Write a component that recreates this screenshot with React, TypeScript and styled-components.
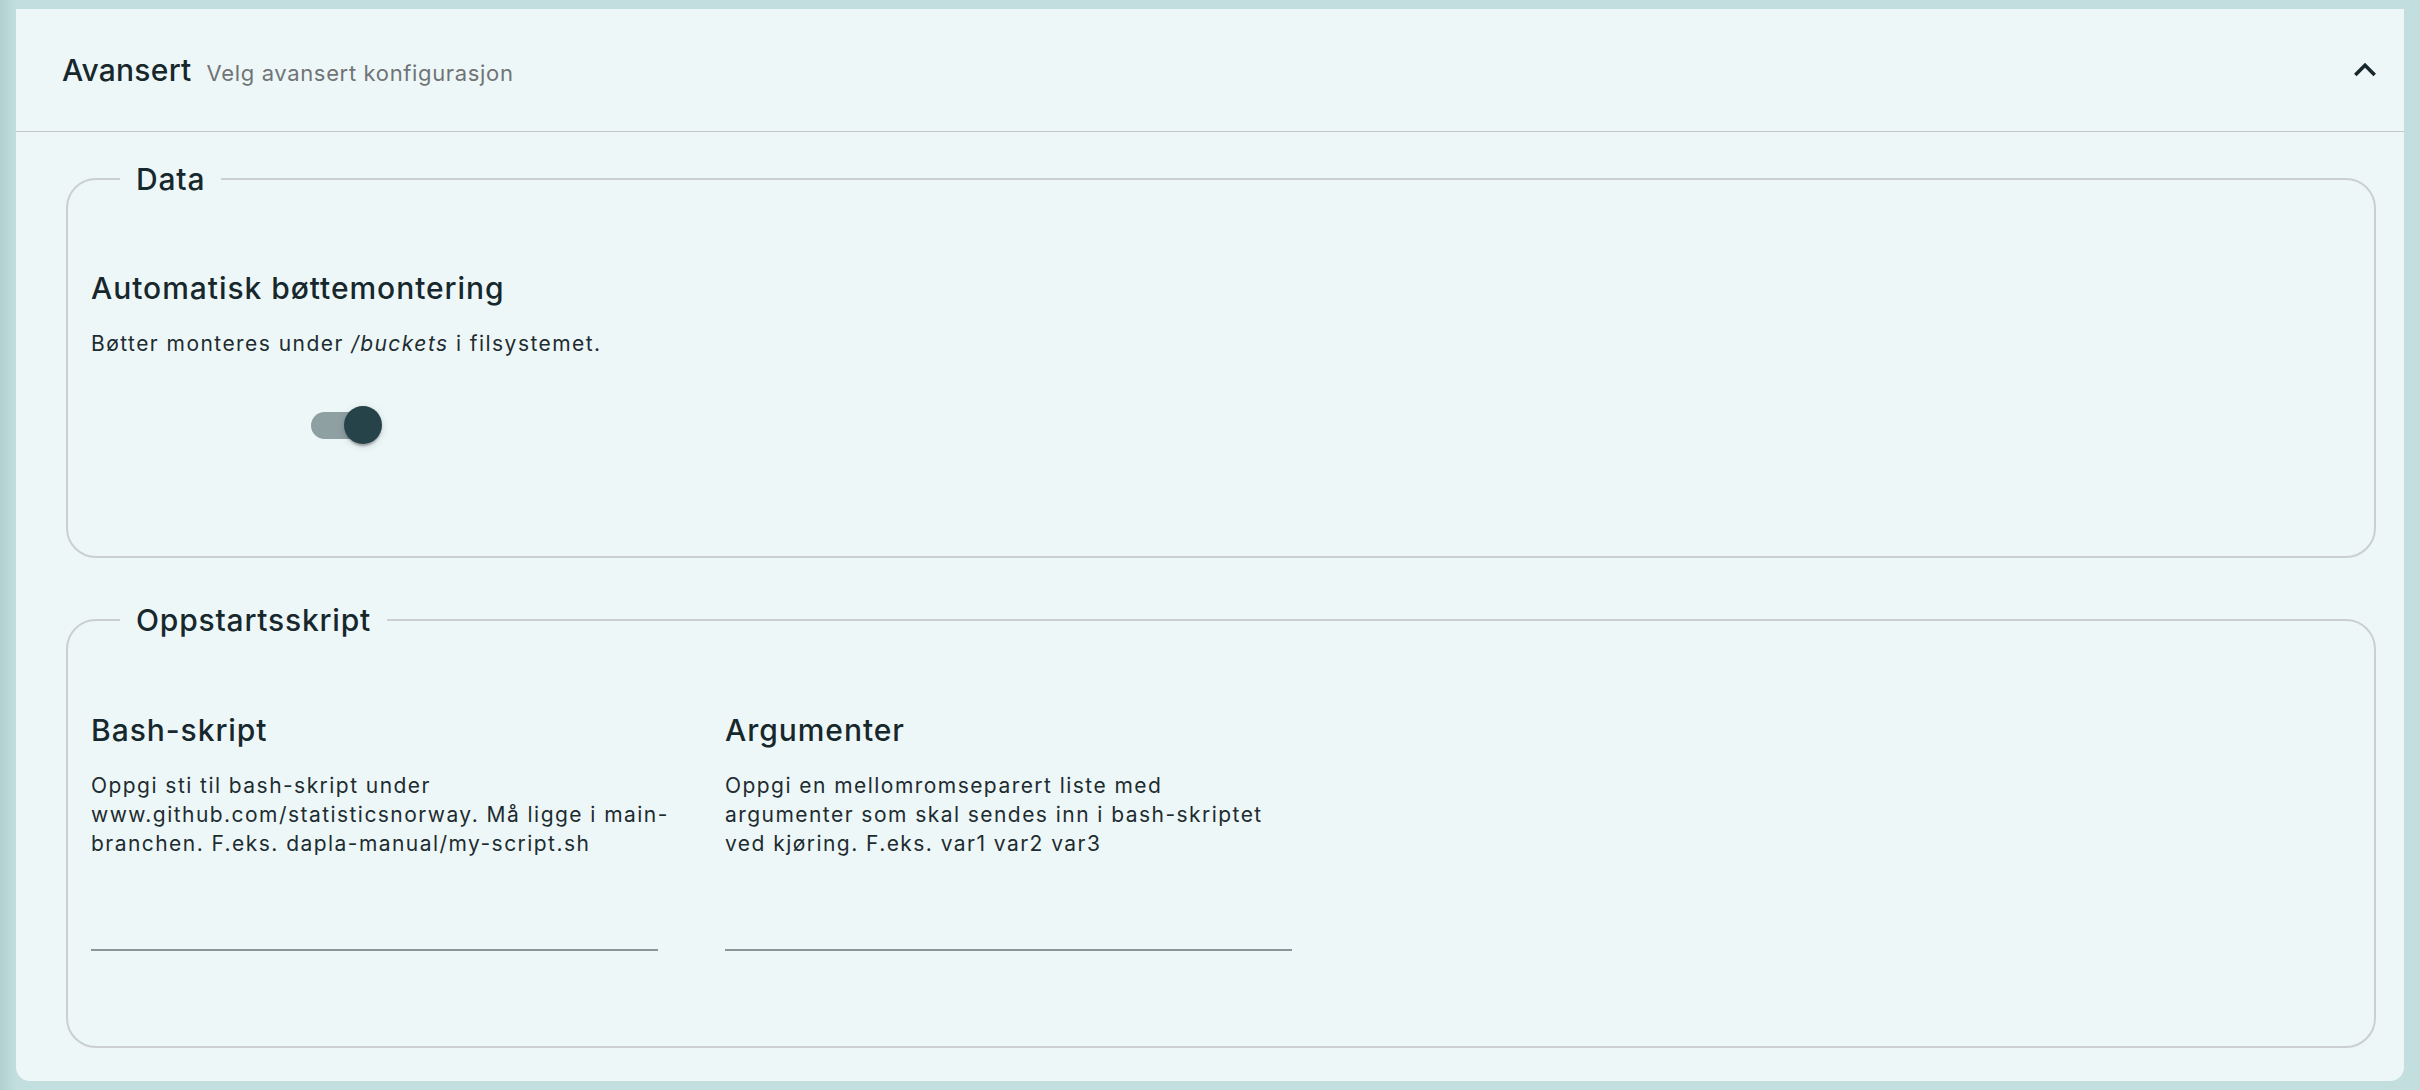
import React from "react";
import styled, { createGlobalStyle } from "styled-components";

const GlobalStyle = createGlobalStyle`
  html, body { margin: 0; padding: 0; }
  body {
    background: linear-gradient(90deg, #b3d0d0 0px, #c2dede 16px);
    background-color: #c2dede;
    font-family: Inter, "Noto Sans", sans-serif;
    color: #1b2b30;
  }
`;

const Page = styled.div`
  padding: 9px 16px 10px 16px;
  box-sizing: border-box;
  min-height: 1090px;
`;

const Panel = styled.section`
  background: #eef7f8;
  border-radius: 0 0 14px 14px;
`;

const Header = styled.header`
  display: flex;
  align-items: center;
  justify-content: space-between;
  height: 123px;
  box-sizing: border-box;
  padding: 0 17px 0 46px;
  border-bottom: 1px solid #c6c9c9;
`;

const TitleGroup = styled.div`
  display: flex;
  align-items: baseline;
  gap: 15px;
`;

const PanelTitle = styled.h2`
  margin: 0;
  font-size: 30px;
  font-weight: 500;
  letter-spacing: 0.25px;
  color: #17282d;
`;

const PanelSubtitle = styled.span`
  font-size: 22px;
  font-weight: 400;
  letter-spacing: 0.65px;
  color: #707476;
`;

const ToggleButton = styled.button`
  display: flex;
  align-items: center;
  justify-content: center;
  padding: 0;
  border: none;
  background: transparent;
  color: #17282d;
  cursor: pointer;
`;

const Content = styled.div`
  display: flex;
  flex-direction: column;
  gap: 43px;
  padding: 28px 28px 33px 50px;
`;

const Fieldset = styled.fieldset<{ $top?: number }>`
  margin: 0;
  min-width: 0;
  border: 2px solid #cbcfcf;
  border-radius: 30px;
  padding: ${(p) => p.$top ?? 72}px 23px 95px 23px;
`;

const Legend = styled.legend`
  margin-left: 29px;
  padding: 0 16px;
  font-size: 30px;
  font-weight: 500;
  line-height: 38px;
  letter-spacing: 0.8px;
  color: #17282d;
`;

const Row = styled.div`
  display: flex;
  gap: 67px;
`;

const Field = styled.div<{ $width?: number }>`
  display: flex;
  flex-direction: column;
  width: ${(p) => (p.$width ? `${p.$width}px` : "fit-content")};
`;

const FieldTitle = styled.h3`
  margin: 0;
  font-size: 30px;
  line-height: 36px;
  font-weight: 500;
  letter-spacing: 0.95px;
  color: #17282d;
`;

const Description = styled.p`
  margin: 23px 0 0 0;
  font-size: 21px;
  line-height: 29px;
  font-weight: 400;
  letter-spacing: 1.45px;
  white-space: nowrap;
  color: #1d2c30;

  em {
    font-style: italic;
  }
`;

const SwitchRoot = styled.label`
  align-self: center;
  margin-top: 31px;
  padding: 17px 0;
  cursor: pointer;
`;

const SwitchVisual = styled.span`
  position: relative;
  display: block;
  width: 71px;
  height: 38px;
`;

const Track = styled.span<{ $on: boolean }>`
  position: absolute;
  left: 0;
  top: 5.5px;
  width: 65px;
  height: 27px;
  border-radius: 14px;
  background: ${(p) => (p.$on ? "#8fa0a3" : "#b9c2c4")};
`;

const Thumb = styled.span<{ $on: boolean }>`
  position: absolute;
  top: 0;
  ${(p) => (p.$on ? "right: 0;" : "left: -6px;")}
  width: 38px;
  height: 38px;
  border-radius: 50%;
  background: ${(p) => (p.$on ? "#27434a" : "#fafafa")};
  box-shadow: 0 4px 2px -2px rgba(0, 0, 0, 0.2), 0 2px 3px 0 rgba(0, 0, 0, 0.14),
    0 2px 8px 0 rgba(0, 0, 0, 0.12);
`;

const HiddenCheckbox = styled.input`
  position: absolute;
  opacity: 0;
  width: 0;
  height: 0;
  margin: 0;
`;

const TextInput = styled.input`
  margin-top: 37px;
  height: 56px;
  width: 100%;
  box-sizing: border-box;
  padding: 0 0 8px 0;
  border: none;
  border-bottom: 2px solid #8b9496;
  background: transparent;
  font-family: inherit;
  font-size: 21px;
  color: #1d2c30;
  outline: none;
`;

function ChevronUp() {
  return (
    <svg width="44" height="44" viewBox="0 0 24 24" fill="currentColor" aria-hidden="true">
      <path d="M12 8l-6 6 1.41 1.41L12 10.83l4.59 4.58L18 14z" />
    </svg>
  );
}

function Switch({ checked, onChange }: { checked: boolean; onChange: (v: boolean) => void }) {
  return (
    <SwitchRoot>
      <HiddenCheckbox
        type="checkbox"
        checked={checked}
        onChange={(e) => onChange(e.target.checked)}
      />
      <SwitchVisual>
        <Track $on={checked} />
        <Thumb $on={checked} />
      </SwitchVisual>
    </SwitchRoot>
  );
}

export default function App() {
  const [mount, setMount] = React.useState(true);
  const [script, setScript] = React.useState("");
  const [args, setArgs] = React.useState("");

  return (
    <>
      <GlobalStyle />
      <Page>
        <Panel>
          <Header>
            <TitleGroup>
              <PanelTitle>Avansert</PanelTitle>
              <PanelSubtitle>Velg avansert konfigurasjon</PanelSubtitle>
            </TitleGroup>
            <ToggleButton aria-label="Skjul">
              <ChevronUp />
            </ToggleButton>
          </Header>
          <Content>
            <Fieldset>
              <Legend>Data</Legend>
              <Field>
                <FieldTitle>Automatisk bøttemontering</FieldTitle>
                <Description>
                  Bøtter monteres under <em>/buckets</em> i filsystemet.
                </Description>
                <Switch checked={mount} onChange={setMount} />
              </Field>
            </Fieldset>
            <Fieldset $top={73}>
              <Legend>Oppstartsskript</Legend>
              <Row>
                <Field $width={567}>
                  <FieldTitle>Bash-skript</FieldTitle>
                  <Description>
                    Oppgi sti til bash-skript under
                    <br />
                    www.github.com/statisticsnorway. Må ligge i main-
                    <br />
                    branchen. F.eks. dapla-manual/my-script.sh
                  </Description>
                  <TextInput value={script} onChange={(e) => setScript(e.target.value)} />
                </Field>
                <Field $width={567}>
                  <FieldTitle>Argumenter</FieldTitle>
                  <Description>
                    Oppgi en mellomromseparert liste med
                    <br />
                    argumenter som skal sendes inn i bash-skriptet
                    <br />
                    ved kjøring. F.eks. var1 var2 var3
                  </Description>
                  <TextInput value={args} onChange={(e) => setArgs(e.target.value)} />
                </Field>
              </Row>
            </Fieldset>
          </Content>
        </Panel>
      </Page>
    </>
  );
}
